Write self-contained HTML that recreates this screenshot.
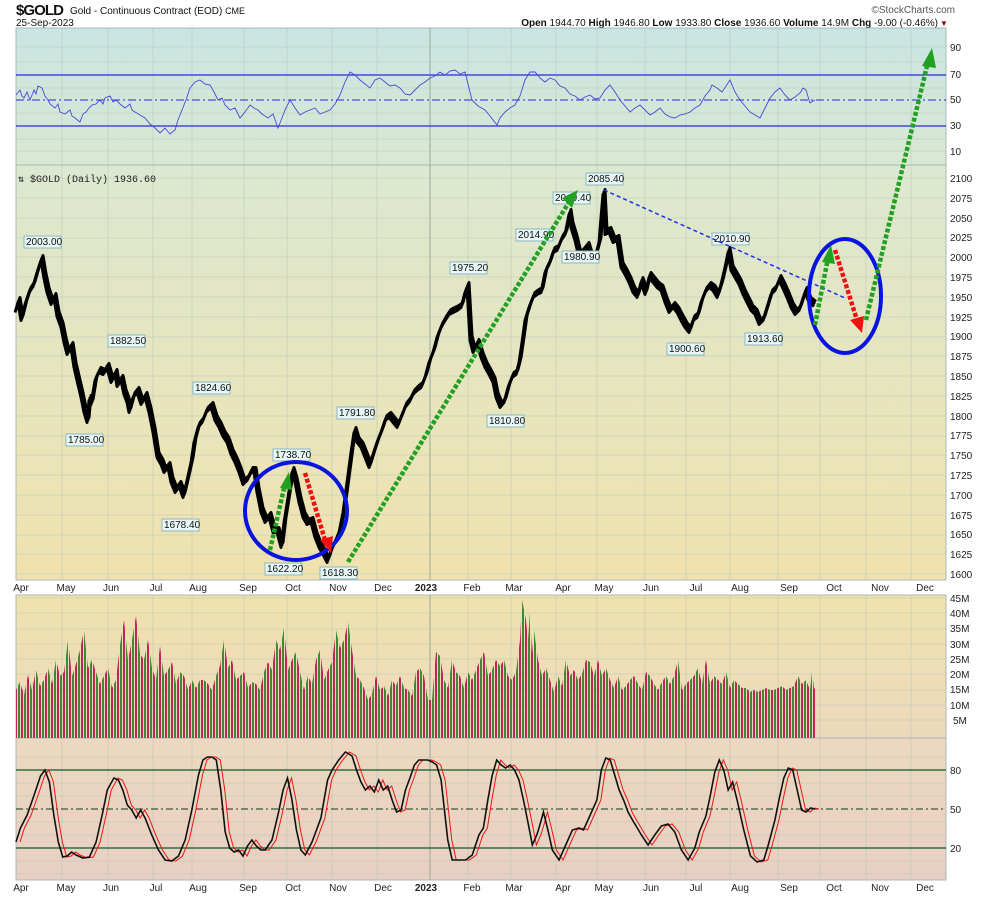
<!DOCTYPE html>
<html><head><meta charset="utf-8"><style>
body{margin:0;background:#fff;width:990px;height:897px;overflow:hidden}
svg{display:block;font-family:"Liberation Sans",sans-serif}
.ax{font-size:10px;fill:#222}
.lb rect{fill:#e8f6f6;stroke:#8ab8c0;stroke-width:1}
.lb text{font-size:10px;fill:#111}
</style></head><body>
<svg width="990" height="897" viewBox="0 0 990 897">
<defs>
<linearGradient id="g1" x1="0" y1="0" x2="0" y2="1"><stop offset="0" stop-color="#c9e5e2"/><stop offset="1" stop-color="#d9e8d2"/></linearGradient>
<linearGradient id="g2" x1="0" y1="0" x2="0" y2="1"><stop offset="0" stop-color="#dce8d0"/><stop offset="1" stop-color="#f0e2ae"/></linearGradient>
<linearGradient id="g3" x1="0" y1="0" x2="0" y2="1"><stop offset="0" stop-color="#f0e2ae"/><stop offset="1" stop-color="#ecd9bc"/></linearGradient>
<linearGradient id="g4" x1="0" y1="0" x2="0" y2="1"><stop offset="0" stop-color="#ecd8c0"/><stop offset="1" stop-color="#e8d0c2"/></linearGradient>
<pattern id="vb" width="6" height="10" patternUnits="userSpaceOnUse"><rect x="0" y="0" width="2" height="10" fill="#3d8a35"/><rect x="3" y="0" width="2" height="10" fill="#c0245a"/></pattern>
</defs>

<text x="16" y="15" font-size="15" font-weight="bold" fill="#111" textLength="48">$GOLD</text>
<text x="70" y="14" font-size="10" fill="#111">Gold - Continuous Contract (EOD) <tspan font-size="9">CME</tspan></text>
<text x="16" y="26" font-size="10" fill="#111">25-Sep-2023</text>
<text x="955" y="13" font-size="10" fill="#555" text-anchor="end">©StockCharts.com</text>
<text x="938" y="26" font-size="10" fill="#111" text-anchor="end"><tspan font-weight="bold">Open</tspan> 1944.70 <tspan font-weight="bold">High</tspan> 1946.80 <tspan font-weight="bold">Low</tspan> 1933.80 <tspan font-weight="bold">Close</tspan> 1936.60 <tspan font-weight="bold">Volume</tspan> 14.9M <tspan font-weight="bold">Chg</tspan> -9.00 (-0.46%)</text>
<text x="940" y="26" font-size="8" fill="#900">▼</text>

<rect x="16" y="28" width="930" height="137" fill="url(#g1)" stroke="#a8b8b8"/>
<rect x="16" y="165" width="930" height="415" fill="url(#g2)" stroke="#a8b8b8"/>
<rect x="16" y="595" width="930" height="143" fill="url(#g3)" stroke="#a8b8b8"/>
<rect x="16" y="738" width="930" height="142" fill="url(#g4)" stroke="#a8b8b8"/>

<g stroke="#b8c4b4" stroke-width="0.6" opacity="0.8">
<path d="M62 28V580M62 595V880M108 28V580M108 595V880M153 28V580M153 595V880M192 28V580M192 595V880M244 28V580M244 595V880M287 28V580M287 595V880M332 28V580M332 595V880M377 28V580M377 595V880M468 28V580M468 595V880M511 28V580M511 595V880M556 28V580M556 595V880M597 28V580M597 595V880M645 28V580M645 595V880M686 28V580M686 595V880M730 28V580M730 595V880M778 28V580M778 595V880M820 28V580M820 595V880M866 28V580M866 595V880M911 28V580M911 595V880"/>
</g>
<path d="M430 28V580M430 595V880" stroke="#9aa89a" stroke-width="1"/>
<g stroke="#b8c8b8" stroke-width="0.5">
<path d="M16 47H946M16 151H946M16 62H946M16 88H946M16 113H946M16 139H946"/>
<path d="M16 178H946M16 198H946M16 218H946M16 238H946M16 257H946M16 277H946M16 297H946M16 317H946M16 337H946M16 356H946M16 376H946M16 396H946M16 416H946M16 436H946M16 455H946M16 475H946M16 495H946M16 515H946M16 535H946M16 554H946M16 574H946"/>
<path d="M16 720H946M16 705H946M16 690H946M16 674H946M16 659H946M16 644H946M16 629H946M16 613H946M16 598H946"/>
<path d="M16 757H946M16 783H946M16 796H946M16 822H946M16 835H946M16 861H946M16 874H946"/>
</g>

<path d="M16 75H946M16 126H946" stroke="#2a2ad8" stroke-width="1.2"/>
<path d="M16 100H946" stroke="#2a2ad8" stroke-width="1" stroke-dasharray="8,3,2,3"/>
<polyline fill="none" stroke="#4848d8" stroke-width="0.9" points="16,95 20,90 22,96 24,98 27,92 30,100 34,90 36,94 38,86 42,88 45,96 48,100 50,104 55,108 58,104 60,112 65,114 70,110 72,116 75,118 80,122 83,114 86,112 89,108 92,105 96,104 100,100 103,104 105,98 110,96 113,102 116,100 120,104 125,108 130,104 132,110 135,112 140,115 145,118 150,124 155,128 160,133 165,128 170,134 175,130 178,120 182,110 186,100 190,88 195,82 200,80 205,84 210,85 214,92 218,100 222,98 225,105 230,110 235,108 240,118 245,112 250,105 254,108 258,110 262,114 268,118 273,114 278,128 282,118 285,110 288,104 290,100 295,108 300,115 305,112 310,110 315,108 320,114 325,112 330,110 335,104 340,95 345,82 350,72 355,75 360,80 365,84 370,88 375,80 380,78 385,82 390,86 395,85 400,88 405,94 410,95 415,90 420,85 425,82 430,78 435,76 440,72 445,75 450,71 455,70 460,74 465,72 468,84 472,100 478,106 485,110 490,116 497,125 500,118 505,112 510,108 515,105 520,96 525,80 530,72 535,72 540,78 545,82 550,78 555,80 560,86 565,88 570,94 575,96 580,100 585,97 590,95 595,99 600,98 605,90 610,85 615,92 620,100 625,106 630,112 635,108 640,105 645,110 650,115 655,112 660,108 665,114 670,117 675,118 680,115 685,114 690,112 695,108 700,105 705,96 710,90 712,85 717,88 722,92 726,86 730,80 735,92 740,100 745,106 750,112 755,115 760,118 765,108 770,98 775,92 780,88 785,95 790,100 795,97 800,93 803,88 806,90 810,103 815,100"/>
<text x="18" y="182" font-size="10" fill="#222" font-family="Liberation Mono,monospace">⇅ $GOLD (Daily) 1936.60</text>

<g fill="none" stroke="#000" stroke-linejoin="round">
<polyline id="pl" stroke-width="3" points="16,310 19,300 22,318 26,302 30,290 34,284 38,270 42,258 45,276 48,290 52,302 55,296 58,314 62,325 65,340 68,352 72,345 75,365 78,378 82,395 85,410 88,420 90,398 92,402 96,378 100,370 104,372 108,366 112,380 116,372 118,384 122,378 125,392 128,400 130,410 134,395 138,390 142,402 146,395 150,410 154,430 158,455 162,462 165,470 169,465 172,480 176,490 180,484 184,495 188,478 192,460 195,440 199,425 203,420 207,410 212,405 216,418 220,425 224,434 228,440 232,452 236,460 240,470 244,482 248,478 252,470 255,470 258,490 262,510 266,520 270,515 274,530 278,530 282,545 285,520 289,495 293,470 296,480 300,500 304,515 308,522 312,520 316,535 320,545 324,552 328,560 332,548 336,540 340,530 344,510 348,480 352,450 355,430 358,440 362,445 366,455 370,465 374,452 378,440 382,430 386,418 390,415 394,420 398,425 402,415 406,405 410,400 414,392 418,388 422,385 426,375 430,360 434,350 438,335 442,325 446,318 450,312 454,310 458,308 462,305 466,290 468,285 471,338 474,350 478,342 482,355 486,365 490,372 494,380 497,395 501,405 505,400 509,385 513,375 517,372 520,360 523,340 526,318 530,305 534,295 538,292 542,290 546,270 550,262 554,250 558,248 562,238 566,232 570,212 572,225 576,238 580,255 584,250 588,245 592,258 596,255 600,240 602,215 604,192 606,232 610,230 614,240 618,238 622,265 626,272 630,280 634,290 638,295 642,280 646,292 650,275 654,280 658,285 662,288 666,300 670,310 674,305 678,310 682,318 686,325 690,330 694,318 698,315 702,300 706,290 710,285 714,288 718,295 722,282 726,265 729,250 732,268 736,275 740,282 744,292 748,300 752,308 756,312 760,322 764,318 768,305 772,292 776,288 780,278 784,286 788,295 792,305 796,312 800,308 804,296 806,290 810,300 815,304"/>
<use href="#pl" transform="translate(1,-2.5)" stroke-width="2"/>
<use href="#pl" transform="translate(-1,2.5)" stroke-width="2"/>
</g>

<g class="lb">
<rect x="24" y="236" width="37" height="12"/><text x="26" y="245">2003.00</text>
<rect x="108" y="335" width="37" height="12"/><text x="110" y="344">1882.50</text>
<rect x="66" y="434" width="37" height="12"/><text x="68" y="443">1785.00</text>
<rect x="193" y="382" width="37" height="12"/><text x="195" y="391">1824.60</text>
<rect x="162" y="519" width="37" height="12"/><text x="164" y="528">1678.40</text>
<rect x="273" y="449" width="37" height="12"/><text x="275" y="458">1738.70</text>
<rect x="265" y="563" width="37" height="12"/><text x="267" y="572">1622.20</text>
<rect x="320" y="567" width="37" height="12"/><text x="322" y="576">1618.30</text>
<rect x="337" y="407" width="37" height="12"/><text x="339" y="416">1791.80</text>
<rect x="450" y="262" width="37" height="12"/><text x="452" y="271">1975.20</text>
<rect x="487" y="415" width="37" height="12"/><text x="489" y="424">1810.80</text>
<rect x="516" y="229" width="37" height="12"/><text x="518" y="238">2014.90</text>
<rect x="553" y="192" width="37" height="12"/><text x="555" y="201">2049.40</text>
<rect x="586" y="173" width="37" height="12"/><text x="588" y="182">2085.40</text>
<rect x="562" y="251" width="37" height="12"/><text x="564" y="260">1980.90</text>
<rect x="712" y="233" width="37" height="12"/><text x="714" y="242">2010.90</text>
<rect x="667" y="343" width="37" height="12"/><text x="669" y="352">1900.60</text>
<rect x="745" y="333" width="37" height="12"/><text x="747" y="342">1913.60</text>
</g>

<path d="M604 190L845 298" stroke="#1d2ee8" stroke-width="1.5" stroke-dasharray="4,3"/>
<ellipse cx="296" cy="511" rx="51" ry="49" fill="none" stroke="#0a14e0" stroke-width="4"/>
<ellipse cx="845" cy="296" rx="36" ry="57" fill="none" stroke="#0a14e0" stroke-width="4"/>
<g stroke-width="4.5" stroke-dasharray="4,2" fill="none">
<path d="M270 550L285 484" stroke="#22a022"/>
<path d="M305 473L325 540" stroke="#f01010"/>
<path d="M348 562L569 202" stroke="#22a022"/>
<path d="M815 325L828 258" stroke="#22a022"/>
<path d="M835 250L857 320" stroke="#f01010"/>
<path d="M866 320L928 62" stroke="#22a022"/>
</g>
<g stroke="none">
<polygon points="289,472 280,488 292,490" fill="#22a022"/>
<polygon points="331,553 320,540 333,536" fill="#f01010"/>
<polygon points="578,190 562,198 572,208" fill="#22a022"/>
<polygon points="831,245 822,262 835,264" fill="#22a022"/>
<polygon points="862,333 850,320 864,316" fill="#f01010"/>
<polygon points="932,48 922,66 936,68" fill="#22a022"/>
</g>

<polygon fill="url(#vb)" points="16,738 16,690 20,682 24,695 28,675 32,690 36,670 40,686 44,680 48,668 52,684 56,660 60,676 64,672 68,640 72,676 76,664 80,650 84,630 88,668 92,660 96,672 100,684 104,676 108,668 112,688 116,680 120,645 124,620 128,660 132,640 136,616 140,654 144,660 148,640 152,668 156,680 160,646 164,676 168,670 172,662 176,684 180,672 184,676 188,690 192,680 196,688 200,680 204,680 208,684 212,690 216,676 220,666 224,640 228,668 232,660 236,680 240,676 244,672 248,688 252,682 256,684 260,690 264,672 268,662 272,670 276,640 280,650 284,628 288,670 292,660 296,652 300,672 304,690 308,676 312,684 316,660 320,650 324,680 328,670 332,662 336,630 340,648 344,640 348,622 352,650 356,676 360,680 364,688 368,700 372,694 376,676 380,690 384,686 388,696 392,680 396,686 400,676 404,688 408,690 412,696 416,672 420,668 424,676 428,700 432,700 436,652 440,656 444,680 448,688 452,660 456,672 460,676 464,688 468,672 472,680 476,670 480,660 484,652 488,676 492,670 496,660 500,666 504,660 508,676 512,680 516,672 520,640 522,600 524,610 526,620 528,640 530,612 532,654 534,630 538,660 542,676 546,668 550,680 554,692 558,676 562,686 566,660 570,676 574,670 578,680 582,674 586,660 590,662 594,676 598,660 602,676 606,668 610,680 614,688 618,676 622,690 626,686 630,680 634,676 638,684 642,690 646,672 650,676 654,684 658,690 662,682 666,676 670,684 674,676 678,660 682,690 686,684 690,680 694,676 698,668 702,684 706,660 710,684 714,676 718,680 722,684 726,672 730,688 734,680 738,684 742,688 746,688 750,692 754,690 758,692 762,690 766,688 770,690 774,690 778,688 782,686 786,690 790,688 794,686 798,676 802,684 806,680 810,690 812,672 814,688 816,690 816,738"/>

<path d="M16 770H946M16 848H946" stroke="#0a5a28" stroke-width="1.3"/>
<path d="M16 809H946" stroke="#0a3a18" stroke-width="1" stroke-dasharray="7,3,2,3"/>
<defs>
<polyline id="stk" fill="none" vector-effect="non-scaling-stroke" points="16,842 20,828 26,815 32,796 38,776 42,770 46,782 50,815 54,842 58,857 62,856 66,852 70,855 76,858 82,857 88,842 94,812 98,790 104,778 108,780 112,790 116,805 120,810 124,818 128,810 132,818 138,835 144,850 150,860 156,861 162,856 168,840 174,810 180,775 184,760 188,757 192,757 196,760 200,790 204,832 208,848 212,852 216,850 220,856 224,846 228,840 232,846 236,850 240,850 246,840 252,812 256,790 260,778 264,800 268,830 272,850 276,855 282,842 290,818 296,780 300,770 306,760 312,752 318,756 322,770 326,782 330,790 334,786 338,792 342,780 346,790 350,786 354,800 358,812 362,810 366,790 370,778 374,765 378,760 382,760 386,760 390,762 394,765 398,780 404,840 408,860 414,860 420,860 426,855 432,835 436,828 440,800 444,775 448,760 452,765 456,768 460,765 464,770 468,780 472,800 476,822 480,845 484,835 486,828 490,812 494,830 498,850 504,860 510,845 516,830 522,828 526,830 532,815 538,800 542,770 546,758 550,760 554,775 558,790 562,800 566,812 570,820 578,835 584,845 590,835 596,826 602,824 608,832 614,850 620,860 626,848 630,832 636,816 640,795 644,772 648,760 652,770 656,790 660,782 664,800 670,830 676,856 682,862 688,860 692,845 698,820 702,798 706,778 710,768 714,770 718,790 722,810 726,812 730,808 734,809"/>
</defs>
<use href="#stk" transform="translate(20,0) scale(1.1128,1) translate(-16,0)" stroke="#e81818" stroke-width="1"/>
<use href="#stk" transform="translate(16,0) scale(1.1128,1) translate(-16,0)" stroke="#111" stroke-width="1.6"/>

<g class="ax">
<text x="950" y="51">90</text><text x="950" y="78">70</text><text x="950" y="103">50</text><text x="950" y="129">30</text><text x="950" y="155">10</text>
<text x="950" y="182">2100</text><text x="950" y="202">2075</text><text x="950" y="222">2050</text><text x="950" y="241">2025</text><text x="950" y="261">2000</text><text x="950" y="281">1975</text><text x="950" y="301">1950</text><text x="950" y="321">1925</text><text x="950" y="340">1900</text><text x="950" y="360">1875</text><text x="950" y="380">1850</text><text x="950" y="400">1825</text><text x="950" y="420">1800</text><text x="950" y="439">1775</text><text x="950" y="459">1750</text><text x="950" y="479">1725</text><text x="950" y="499">1700</text><text x="950" y="519">1675</text><text x="950" y="538">1650</text><text x="950" y="558">1625</text><text x="950" y="578">1600</text>
<text x="950" y="602">45M</text><text x="950" y="617">40M</text><text x="950" y="632">35M</text><text x="950" y="648">30M</text><text x="950" y="663">25M</text><text x="950" y="678">20M</text><text x="950" y="693">15M</text><text x="950" y="709">10M</text><text x="953" y="724">5M</text>
<text x="950" y="774">80</text><text x="950" y="813">50</text><text x="950" y="852">20</text>
</g>
<g class="ax" text-anchor="middle">
<text x="21" y="591">Apr</text><text x="66" y="591">May</text><text x="111" y="591">Jun</text><text x="156" y="591">Jul</text><text x="198" y="591">Aug</text><text x="248" y="591">Sep</text><text x="293" y="591">Oct</text><text x="338" y="591">Nov</text><text x="383" y="591">Dec</text><text x="426" y="591" font-weight="bold">2023</text><text x="472" y="591">Feb</text><text x="514" y="591">Mar</text><text x="563" y="591">Apr</text><text x="604" y="591">May</text><text x="651" y="591">Jun</text><text x="696" y="591">Jul</text><text x="740" y="591">Aug</text><text x="789" y="591">Sep</text><text x="834" y="591">Oct</text><text x="880" y="591">Nov</text><text x="925" y="591">Dec</text>
<text x="21" y="891">Apr</text><text x="66" y="891">May</text><text x="111" y="891">Jun</text><text x="156" y="891">Jul</text><text x="198" y="891">Aug</text><text x="248" y="891">Sep</text><text x="293" y="891">Oct</text><text x="338" y="891">Nov</text><text x="383" y="891">Dec</text><text x="426" y="891" font-weight="bold">2023</text><text x="472" y="891">Feb</text><text x="514" y="891">Mar</text><text x="563" y="891">Apr</text><text x="604" y="891">May</text><text x="651" y="891">Jun</text><text x="696" y="891">Jul</text><text x="740" y="891">Aug</text><text x="789" y="891">Sep</text><text x="834" y="891">Oct</text><text x="880" y="891">Nov</text><text x="925" y="891">Dec</text>
</g>
</svg>
</body></html>
